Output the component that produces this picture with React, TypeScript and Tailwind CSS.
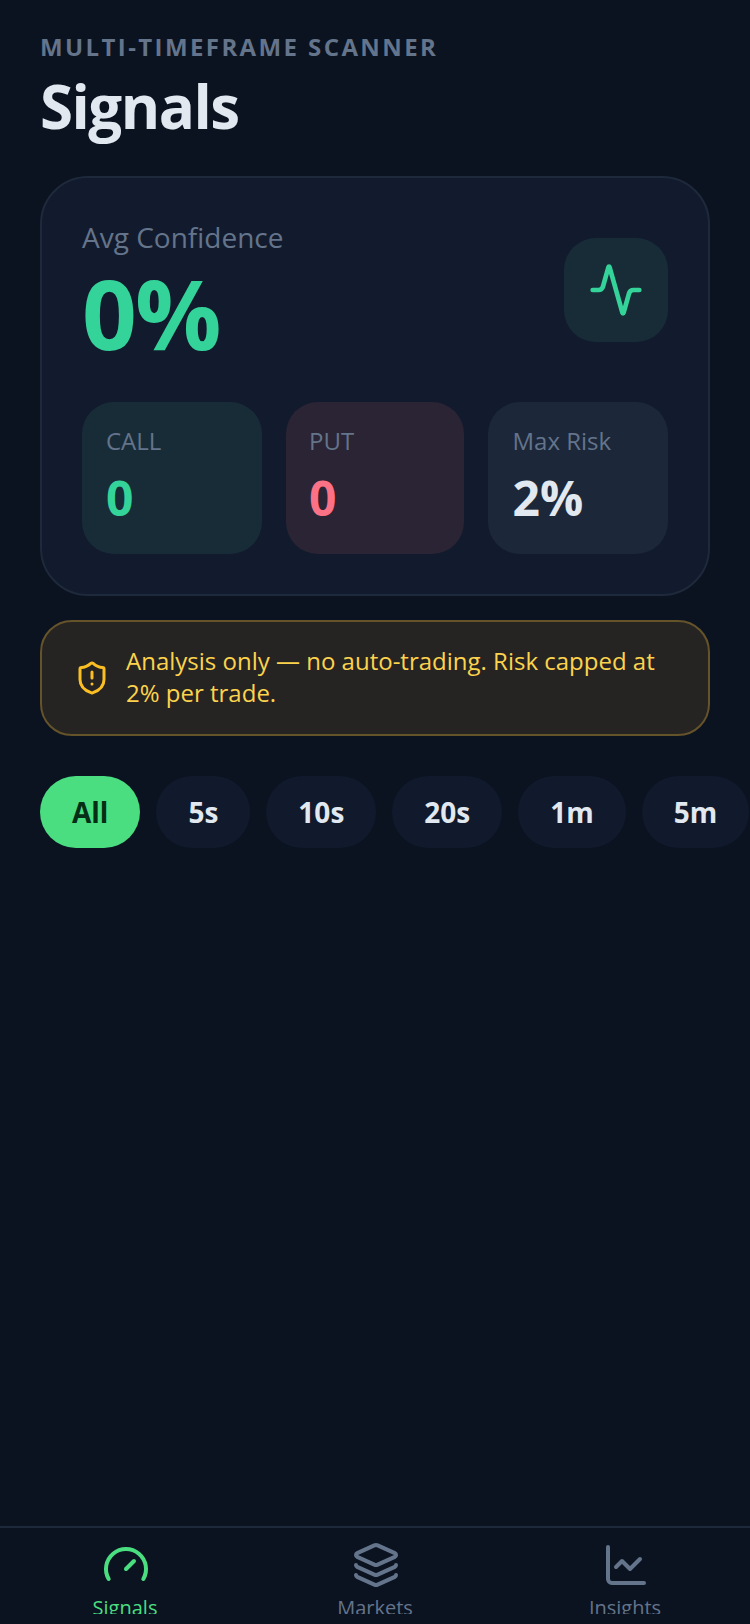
import { Activity, ChartLine, Gauge, Layers, ShieldAlert } from 'lucide-react';

const timeframes = ['All', '5s', '10s', '20s', '1m', '5m'];

const navItems = [
  { label: 'Signals', icon: Gauge, active: true },
  { label: 'Markets', icon: Layers, active: false },
  { label: 'Insights', icon: ChartLine, active: false },
];

export default function App() {
  return (
    <div className="flex flex-col h-[1624px] w-[750px] overflow-hidden bg-[#0b1320] font-['Open_Sans',sans-serif]">
      <div className="flex-1 flex flex-col pt-[31px] min-h-0">
        {/* Header */}
        <div className="px-[40px]">
          <div className="text-[24px] leading-[32px] font-bold tracking-[2.4px] text-[#64748b]">MULTI-TIMEFRAME SCANNER</div>
          <div className="text-[60px] leading-[72px] font-bold tracking-[-1.5px] text-[#e2e8f0] mt-[7px]">Signals</div>
        </div>

        {/* Summary card */}
        <div className="mx-[40px] mt-[34px] p-[40px] rounded-[48px] border-2 border-[#1e293b] bg-[#121b2d]">
          <div className="flex items-center justify-between">
            <div>
              <div className="text-[28px] leading-[38px] text-[#64748b]">Avg Confidence</div>
              <div className="text-[96px] leading-[92px] font-bold tracking-[-2px] text-[#34d399] mt-[11px] mb-[3px]">0%</div>
            </div>
            <div className="w-[104px] h-[104px] rounded-[32px] bg-[#182c38] flex items-center justify-center">
              <Activity size={56} color="#34d399" strokeWidth={2} />
            </div>
          </div>
          <div className="flex gap-[24px] mt-[40px]">
            <div className="w-[180px] h-[152px] rounded-[32px] bg-[#182c38] pl-[24px] pt-[21px]">
              <div className="text-[24px] leading-[36px] text-[#64748b]">CALL</div>
              <div className="text-[48px] leading-[60px] font-bold text-[#34d399] mt-[9px]">0</div>
            </div>
            <div className="w-[178px] h-[152px] rounded-[32px] bg-[#2a2434] pl-[23px] pt-[21px]">
              <div className="text-[24px] leading-[36px] text-[#64748b]">PUT</div>
              <div className="text-[48px] leading-[60px] font-bold text-[#fb7185] mt-[9px]">0</div>
            </div>
            <div className="w-[180px] h-[152px] rounded-[32px] bg-[#1c273a] pl-[24.5px] pt-[21px]">
              <div className="text-[24px] leading-[36px] text-[#64748b]">Max Risk</div>
              <div className="text-[48px] leading-[60px] font-bold text-[#e2e8f0] mt-[9px]">2%</div>
            </div>
          </div>
        </div>

        {/* Risk banner */}
        <div className="mx-[40px] mt-[24px] h-[116px] px-[32px] rounded-[32px] border-2 border-[#65532a] bg-[#262422] flex items-center gap-[16px]">
          <ShieldAlert size={36} color="#fbbf24" strokeWidth={2} className="shrink-0" />
          <div className="text-[24px] leading-[32px] text-[#fcd34d] mb-[2px]">Analysis only — no auto-trading. Risk capped at 2% per trade.</div>
        </div>

        {/* Timeframe filter */}
        <div className="flex gap-[16px] mt-[40px] pl-[40px] overflow-hidden">
          {timeframes.map((tf) => (
            <div
              key={tf}
              className={`shrink-0 h-[72px] px-[32px] rounded-full flex items-center text-[28px] font-bold ${
                tf === 'All' ? 'bg-[#4ade80] text-[#052e16]' : 'bg-[#101a2c] text-[#e2e8f0]'
              }`}
            >
              {tf}
            </div>
          ))}
        </div>
      </div>

      {/* Bottom nav, labels get cut off by the bar's inner box */}
      <div className="h-[98px] border-t-2 border-[#1e293b] bg-[#0b1320] pb-[10px]">
        <div className="flex h-full overflow-hidden pt-[13px]">
          {navItems.map((item) => {
            const Icon = item.icon;
            return (
              <div key={item.label} className="flex-1 flex flex-col items-center">
                <Icon size={48} color={item.active ? '#4ade80' : '#64748b'} strokeWidth={2} className="shrink-0 ml-[2px]" />
                <span className={`shrink-0 text-[20px] leading-[24px] mt-[7px] ${item.active ? 'text-[#4ade80]' : 'text-[#64748b]'}`}>{item.label}</span>
              </div>
            );
          })}
        </div>
      </div>
    </div>
  );
}
